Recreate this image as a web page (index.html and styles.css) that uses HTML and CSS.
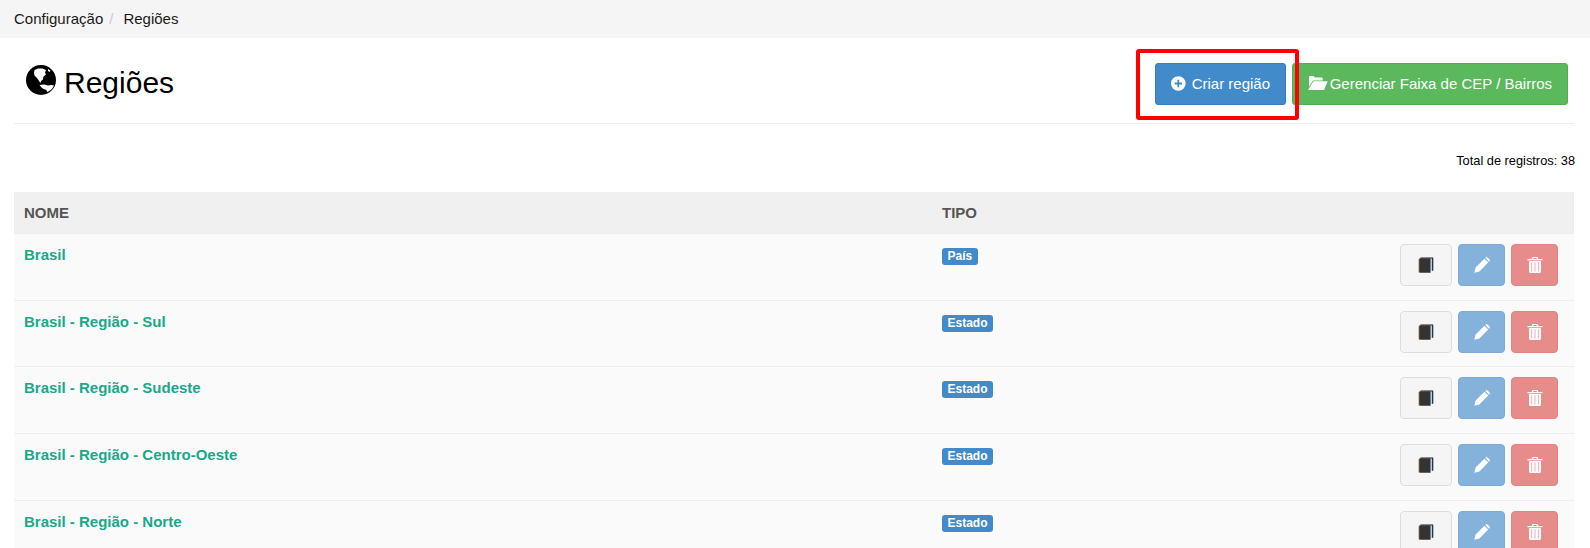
FILE: index.html
```html
<!DOCTYPE html>
<html lang="pt">
<head>
<meta charset="utf-8">
<title>Regiões</title>
<link rel="stylesheet" href="styles.css">
</head>
<body>
<svg class="sprite" width="0" height="0" aria-hidden="true">
  <symbol id="i-book" viewBox="0 0 15 16"><path d="M2 .6h12.500v13.200h-1.200V1.600H2z" fill="#222"/><rect x="14.300" y=".8" width=".7" height="13" fill="#3f86c8"/><path d="M.6 2.300C.6 1.600 1.100 1.200 1.800 1.200h10.300v14.600H1.800c-.7 0-1.200-.4-1.200-1.100z" fill="#333"/><rect x="0" y="2" width=".6" height="13.500" fill="#c98f55"/></symbol>
  <symbol id="i-pencil" viewBox="0 0 16 16"><path fill="currentColor" d="M.3 15.700l1.300-5.100 8.800-8.800 3.800 3.800-8.800 8.800zM11.300 1l.5-.5c.5-.5 1.300-.5 1.800 0l1.900 1.900c.5.500.5 1.300 0 1.800l-.5.5z"/></symbol>
  <symbol id="i-trash" viewBox="0 0 15 16"><path fill="currentColor" fill-rule="evenodd" d="M5 0h5l.9 1.900H15v1.300H0V1.900h4.100zM6 1.100l-.4.800h3.800L9 1.100zM1.500 4h12v10.600c0 .8-.6 1.400-1.300 1.400H2.800c-.7 0-1.300-.6-1.300-1.400zM3.900 5.300v9.200h.7V5.300zM7.150 5.300v9.200h.7V5.300zM10.400 5.300v9.200h.7V5.300z"/></symbol>
</svg>
<nav class="breadcrumb"><a href="#">Configuração</a><span class="sep">/</span><span class="current">Regiões</span></nav>
<main class="content">
  <header class="page-head">
    <h1 class="title">
      <svg class="globe" viewBox="0 0 30 30" aria-hidden="true"><circle cx="15" cy="15" r="15" fill="#000"/><path fill="#fff" d="M8.500 5l3.500-1.500 4.500 0 3.500 1.500-1 2.500 1 2-2.500 2-.5 3-2 1.500-.5 2-1.500-2-2-3-2.500-2.500L8 8zM13.500 20l4.500-.5 4 1 3.500-.5 2.500.5-2 3.500-3.500 2.500-1.500.5-.5-2-3-1-2-1.500zM22 4l2.500 1.500-1 1.500-1.500-1z"/></svg>
      Regiões
    </h1>
    <div class="actions">
      <span class="highlight">
        <a class="btn btn-blue" href="#"><svg class="ico-plus" viewBox="0 0 16 16" aria-hidden="true"><path fill="#fff" fill-rule="evenodd" d="M8 0a8 8 0 1 0 0 16A8 8 0 0 0 8 0zM7 4h2v3h3v2H9v3H7V9H4V7h3z"/></svg>Criar região</a>
      </span>
      <a class="btn btn-green" href="#"><svg class="ico-folder" viewBox="0 0 20 14" aria-hidden="true"><path fill="#fff" d="M1 1.200C1 .5 1.500 0 2.200 0h3.600l1.200 1.500h6.800c.7 0 1.200.5 1.200 1.200V4.500H5L1 11z"/><path fill="#fff" d="M5.500 5.200H20L16.300 14H0z"/></svg>Gerenciar Faixa de CEP / Bairros</a>
    </div>
  </header>
  <p class="total">Total de registros: 38</p>
  <table class="grid">
    <thead><tr><th class="col-name">NOME</th><th class="col-type">TIPO</th><th></th></tr></thead>
    <tbody>
      <tr><td><a class="name" href="#">Brasil</a></td><td><span class="tag">País</span></td><td class="ops"><a class="op op-book" href="#"><svg><use href="#i-book"/></svg></a><a class="op op-edit" href="#"><svg><use href="#i-pencil"/></svg></a><a class="op op-del" href="#"><svg><use href="#i-trash"/></svg></a></td></tr>
      <tr><td><a class="name" href="#">Brasil - Região - Sul</a></td><td><span class="tag">Estado</span></td><td class="ops"><a class="op op-book" href="#"><svg><use href="#i-book"/></svg></a><a class="op op-edit" href="#"><svg><use href="#i-pencil"/></svg></a><a class="op op-del" href="#"><svg><use href="#i-trash"/></svg></a></td></tr>
      <tr><td><a class="name" href="#">Brasil - Região - Sudeste</a></td><td><span class="tag">Estado</span></td><td class="ops"><a class="op op-book" href="#"><svg><use href="#i-book"/></svg></a><a class="op op-edit" href="#"><svg><use href="#i-pencil"/></svg></a><a class="op op-del" href="#"><svg><use href="#i-trash"/></svg></a></td></tr>
      <tr><td><a class="name" href="#">Brasil - Região - Centro-Oeste</a></td><td><span class="tag">Estado</span></td><td class="ops"><a class="op op-book" href="#"><svg><use href="#i-book"/></svg></a><a class="op op-edit" href="#"><svg><use href="#i-pencil"/></svg></a><a class="op op-del" href="#"><svg><use href="#i-trash"/></svg></a></td></tr>
      <tr><td><a class="name" href="#">Brasil - Região - Norte</a></td><td><span class="tag">Estado</span></td><td class="ops"><a class="op op-book" href="#"><svg><use href="#i-book"/></svg></a><a class="op op-edit" href="#"><svg><use href="#i-pencil"/></svg></a><a class="op op-del" href="#"><svg><use href="#i-trash"/></svg></a></td></tr>
    </tbody>
  </table>
</main>
</body>
</html>
```
FILE: styles.css
```css
*, *::before, *::after { box-sizing: border-box; }
html, body { margin: 0; height: 548px; overflow: hidden; }
body { font-family: "Liberation Sans", Arial, sans-serif; font-size: 15px; color: #000; background: #fff; }
a { text-decoration: none; color: inherit; }
.sprite { position: absolute; }
.breadcrumb { height: 38px; background: #f5f5f5; padding: 0 14px 2px; display: flex; align-items: center; color: #1a1a1a; }
.sep { color: #ccc; padding: 0 10px 0 6px; }
.content { padding: 0 16px 0 14px; }
.page-head { height: 86px; border-bottom: 1px solid #eee; display: flex; justify-content: space-between; align-items: flex-start; padding: 25px 6px 0 12px; }
.title { margin: 2px 0 0; font-size: 30px; font-weight: 400; line-height: 36px; display: flex; align-items: flex-start; gap: 8px; }
.globe { width: 30px; height: 30px; }
.actions { display: flex; gap: 6px; }
.highlight { position: relative; display: block; }
.highlight::after { content: ""; position: absolute; left: -19px; top: -14px; width: 163px; height: 71px; border: 4px solid #f00; border-radius: 3px; }
.btn { display: flex; align-items: center; height: 42px; border-radius: 3px; color: #fff; font-size: 15px; padding: 0 15px 2px; white-space: nowrap; }
.btn-blue { background: #428bca; border: 1px solid #357ebd; width: 131px; }
.btn-green { background: #5cb85c; border: 1px solid #4cae4c; width: 276px; }
.ico-plus { width: 15px; height: 15px; margin-right: 6px; }
.ico-folder { width: 20px; height: 14px; margin-right: 2px; }
.total { margin: 0 -1px 0 0; padding-top: 28px; height: 68px; text-align: right; font-size: 12.8px; line-height: 17px; }
.grid { width: 1560px; border-collapse: separate; border-spacing: 0; table-layout: fixed; }
.grid th { height: 41px; background: #f0f0f0; color: #555; text-align: left; font-size: 15px; font-weight: 700; padding: 0 10px; }
.col-name { width: 918px; }
.col-type { width: 400px; }
.grid td { height: 66.67px; background: #fafafa; border-top: 1px solid #eee; padding: 10px 10px 0; vertical-align: top; }
.name { display: block; color: #18a98b; font-weight: 700; font-size: 15px; line-height: 22px; }
.tag { display: inline-block; background: #428bca; color: #fff; font-size: 12px; font-weight: 700; line-height: 17px; height: 17px; padding: 0 5.5px; border-radius: 3px; vertical-align: top; margin-top: 4px; }
.grid td.ops { text-align: right; white-space: nowrap; font-size: 0; padding-right: 16px; }
.op { display: inline-flex; align-items: center; justify-content: center; height: 42px; border-radius: 4px; margin-left: 6px; vertical-align: top; }
.op svg { width: 16px; height: 16px; }
.op-book { width: 52px; background: #f5f5f5; border: 1px solid #ddd; }
.op-edit { width: 47px; background: #85b2da; border: 1px solid #7fa9d4; color: #fff; }
.op-del { width: 47px; background: #e68d8b; border: 1px solid #e08583; color: #fff; }
```
